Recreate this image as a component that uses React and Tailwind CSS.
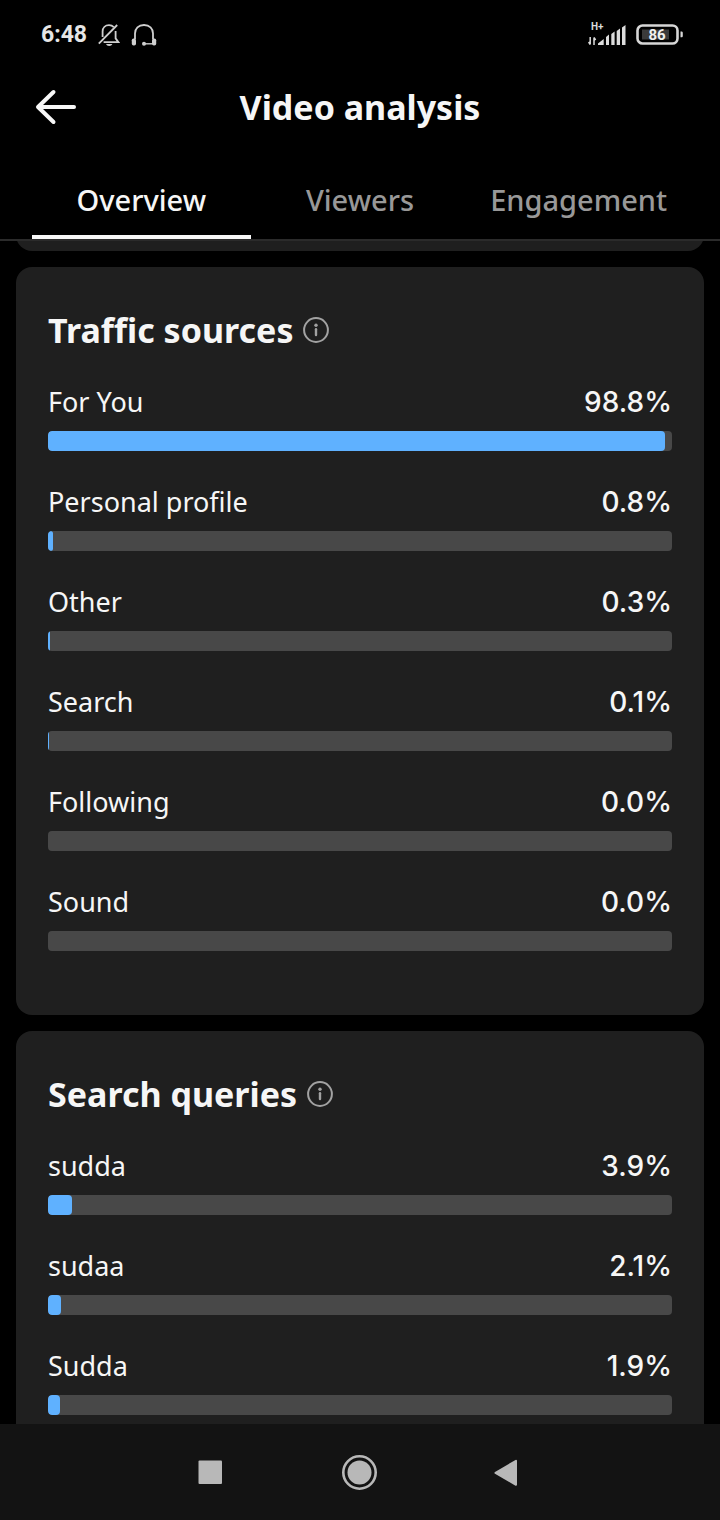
import React, { useState } from 'react';

const tabs = ['Overview', 'Viewers', 'Engagement'];

const trafficSources = [
  { label: 'For You', value: 98.8 },
  { label: 'Personal profile', value: 0.8 },
  { label: 'Other', value: 0.3 },
  { label: 'Search', value: 0.1 },
  { label: 'Following', value: 0 },
  { label: 'Sound', value: 0 },
];

const searchQueries = [
  { label: 'sudda', value: 3.9 },
  { label: 'sudaa', value: 2.1 },
  { label: 'Sudda', value: 1.9 },
];

const BellOffIcon = () => (
  <svg width="22" height="24" viewBox="0 0 22 24" fill="none" stroke="#cfcfcf" strokeWidth="1.8">
    <path d="M4.600 14V8.600C4.600 4.600 7.400 2.200 11 2.200c2 0 3.600.7 4.800 1.900M17.600 8v7.400l2.800 3.800H5.600" />
    <path d="M0.800 20.600L19.200 2" />
    <path d="M8 21h6.400c-.6 1.300-1.700 2-3.200 2S8.600 22.300 8 21z" fill="#cfcfcf" stroke="none" />
  </svg>
);

const HeadsetIcon = () => (
  <svg width="26" height="24" viewBox="0 0 26 24" fill="none" stroke="#cfcfcf" strokeWidth="1.8">
    <path d="M4 16V10.500C4 5.500 7.500 2 13 2s9 3.500 9 8.500V16" />
    <path d="M21.500 20.800H13" strokeWidth="1.400" />
    <rect x="0.800" y="15.500" width="4.200" height="7" rx="1.800" fill="#cfcfcf" stroke="none" />
    <rect x="21" y="15.500" width="4.200" height="7" rx="1.800" fill="#cfcfcf" stroke="none" />
    <circle cx="13" cy="20.800" r="2" fill="#cfcfcf" stroke="none" />
  </svg>
);

const SignalIcon = () => (
  <svg width="40" height="28" viewBox="0 0 40 28" fill="#dcdcdc">
    <text x="3" y="9" fontSize="10" fontWeight="700" fontFamily="Roboto, sans-serif">H+</text>
    <path d="M2.200 16v7.500M0.600 21l1.600 2.500M6 24v-7.500M7.600 19L6 16.500" stroke="#dcdcdc" strokeWidth="1.500" fill="none" />
    <path d="M10 24v-1.500L15.700 18v6zM18 24v-8l3-2.500V24zM23.300 24V13l3.300-2.500V24zM28.700 24V10L32 7.500V24zM34 24V6.500L37.500 4v20z" />
  </svg>
);

const BatteryIcon = () => (
  <svg width="48" height="24" viewBox="0 0 48 24" fill="none">
    <rect x="1.500" y="2.500" width="40" height="18" rx="5" stroke="#d6d6d6" strokeWidth="2.600" />
    <rect x="6" y="6.500" width="27" height="10" fill="#3a3a3a" />
    <path d="M44.500 8.500h1c.8 0 1.300.6 1.300 1.400v3c0 .8-.5 1.400-1.300 1.400h-1z" fill="#d6d6d6" />
    <text x="21" y="16.500" fontSize="15" fontWeight="700" fontFamily="Roboto, sans-serif" textAnchor="middle" fill="#f0f0f0">86</text>
  </svg>
);

const BackIcon = () => (
  <svg width="42" height="36" viewBox="0 0 42 36" fill="none" stroke="#f8f8f8" strokeWidth="4" strokeLinecap="round" strokeLinejoin="round">
    <path d="M18.500 3L3 18l15.500 15" />
    <path d="M4 18h35" />
  </svg>
);

const InfoIcon = () => (
  <svg width="26" height="26" viewBox="0 0 26 26" fill="none">
    <circle cx="13" cy="13" r="11.900" stroke="#a2a2a2" strokeWidth="2" />
    <circle cx="13" cy="8.200" r="1.700" fill="#a2a2a2" />
    <path d="M13 12.200v5.800" stroke="#a2a2a2" strokeWidth="2.400" strokeLinecap="round" />
  </svg>
);

const StatRow = ({ label, value }) => (
  <li>
    <div className="flex items-center justify-between leading-10 mb-[9px]">
      <span className="text-[27px]">{label}</span>
      <span className="font-[Inter] text-[28px] font-medium">{value.toFixed(1)}%</span>
    </div>
    <div className="h-5 rounded bg-[#484848] overflow-hidden">
      <div className="h-full rounded bg-[#5fb1ff]" style={{ width: `${value}%` }} />
    </div>
  </li>
);

const StatCard = ({ title, items }) => (
  <section className="shrink-0 rounded-2xl bg-[#1f1f1f] px-8 pt-[39px] pb-16">
    <div className="flex items-center gap-2.5 mb-7">
      <h2 className="text-[34px] leading-12 font-bold">{title}</h2>
      <button type="button" aria-label={`About ${title}`}>
        <InfoIcon />
      </button>
    </div>
    <ul className="flex flex-col gap-[31px]">
      {items.map((item) => (
        <StatRow key={item.label} label={item.label} value={item.value} />
      ))}
    </ul>
  </section>
);

const App = () => {
  const [activeTab, setActiveTab] = useState('Overview');

  return (
    <div className="h-screen flex flex-col bg-black text-[#f6f6f6] font-['Noto_Sans',sans-serif]">
      {/* Status bar */}
      <div className="h-[70px] shrink-0 flex items-center justify-between pl-[41px] pr-9">
        <div className="flex items-center gap-[11px]">
          <span className="font-[Roboto] text-[23px] font-bold text-[#e6e6e6]">6:48</span>
          <BellOffIcon />
          <HeadsetIcon />
        </div>
        <div className="flex items-center gap-2">
          <SignalIcon />
          <BatteryIcon />
        </div>
      </div>

      {/* Header */}
      <header className="h-[74px] shrink-0 grid grid-cols-[1fr_auto_1fr] items-center px-[35px]">
        <button type="button" aria-label="Back" className="justify-self-start">
          <BackIcon />
        </button>
        <h1 className="text-[34px] leading-12 font-bold">Video analysis</h1>
      </header>

      {/* Tabs */}
      <nav className="shrink-0 grid grid-cols-3 px-8 border-b-2 border-[#2b2b2b]">
        {tabs.map((tab) => (
          <button
            key={tab}
            type="button"
            onClick={() => setActiveTab(tab)}
            className={`pt-[34px] pb-[13px] text-[29px] leading-11 font-medium border-b-4 ${
              activeTab === tab ? 'border-[#f8f8f8]' : 'border-transparent text-[#989898]'
            }`}
          >
            {tab}
          </button>
        ))}
      </nav>

      {/* Scrolled content */}
      <main className="flex-1 min-h-0 overflow-hidden">
        <div className="-mt-6 px-4 flex flex-col gap-4">
          <section className="h-[34px] rounded-2xl bg-[#1f1f1f]" />
          <StatCard title="Traffic sources" items={trafficSources} />
          <StatCard title="Search queries" items={searchQueries} />
        </div>
      </main>

      {/* System navigation */}
      <footer className="h-24 shrink-0 flex items-center justify-center gap-[114px] bg-[#131313]">
        <button type="button" aria-label="Recent apps">
          <svg width="36" height="36" viewBox="0 0 36 36">
            <rect x="6.500" y="6.500" width="23.500" height="23.500" rx="1" fill="#b8b8b8" />
          </svg>
        </button>
        <button type="button" aria-label="Home">
          <svg width="36" height="36" viewBox="0 0 36 36">
            <circle cx="17.500" cy="18.500" r="16.200" fill="none" stroke="#b8b8b8" strokeWidth="2.600" />
            <circle cx="17.500" cy="18.500" r="12" fill="#b8b8b8" />
          </svg>
        </button>
        <button type="button" aria-label="Back">
          <svg width="36" height="36" viewBox="0 0 36 36">
            <path d="M24 6.800v24L3.500 18.800z" fill="#b8b8b8" stroke="#b8b8b8" strokeWidth="2" strokeLinejoin="round" />
          </svg>
        </button>
      </footer>
    </div>
  );
};

export default App;
